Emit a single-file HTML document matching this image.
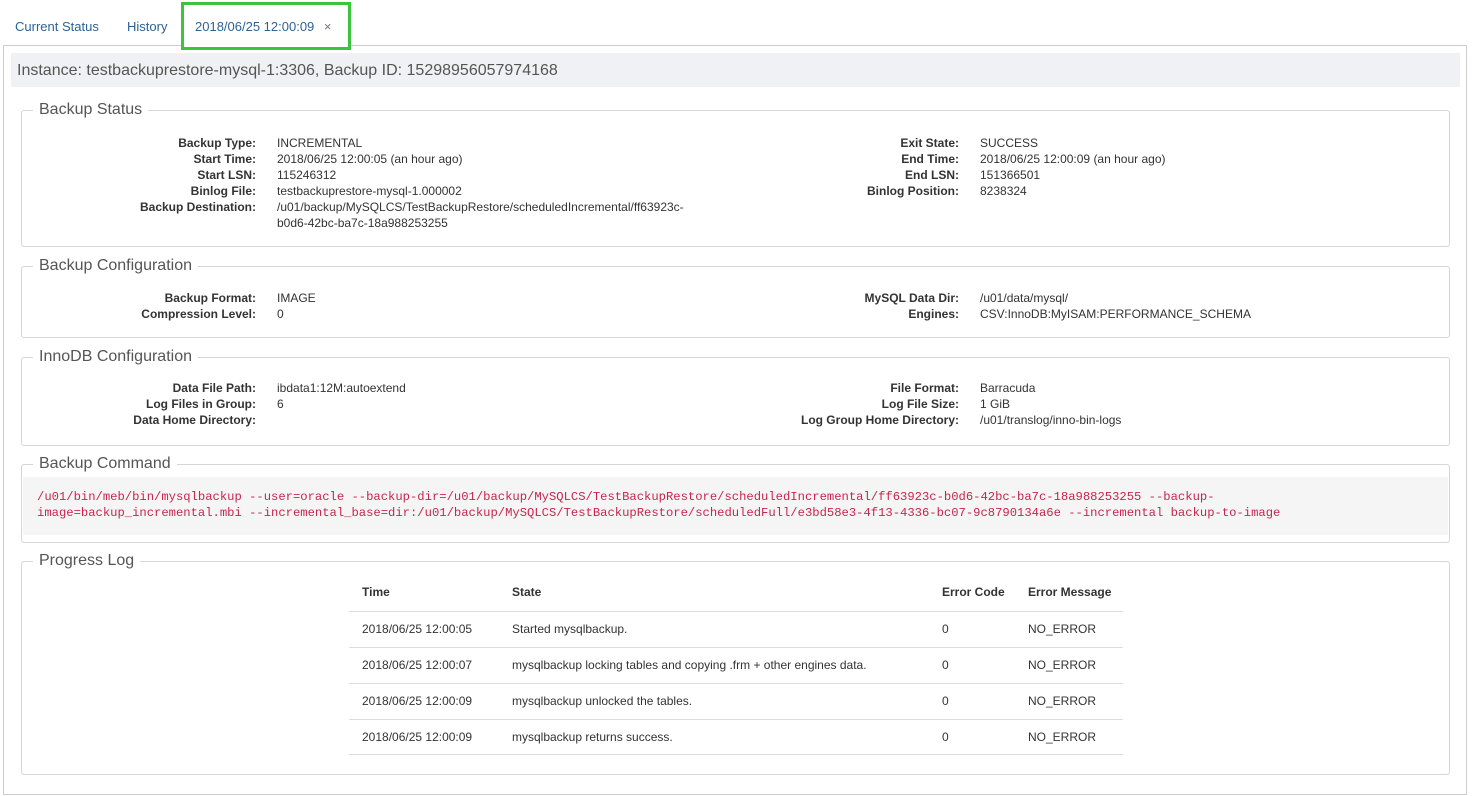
<!DOCTYPE html>
<html><head><meta charset="utf-8"><style>
*{box-sizing:border-box;margin:0;padding:0}
body{width:1472px;height:796px;background:#fff;font-family:"Liberation Sans",sans-serif;font-size:12px;color:#333;position:relative;overflow:hidden}
.a{position:absolute;white-space:nowrap}
.tab{position:absolute;top:19px;font-size:13px;color:#2a6496}
.fs{position:absolute;left:21px;width:1429px;border:1px solid #d6d6d6;border-radius:3px}
.lg{position:absolute;top:-11px;left:11px;background:#fff;padding:0 6px;font-size:16px;color:#555;line-height:20px}
.l{position:absolute;text-align:right;font-weight:bold;color:#333;line-height:16px;white-space:nowrap}
.v{position:absolute;line-height:16px;white-space:nowrap;color:#333}
.row{position:absolute;left:349px;width:774px;height:36px;border-top:1px solid #ddd}
.row span{position:absolute;top:10px;white-space:nowrap}
</style></head><body>
<div class="a" style="left:3px;top:45px;width:1464px;height:750px;border:1px solid #ccc"></div>
<div class="tab" style="left:15px">Current Status</div>
<div class="tab" style="left:127px">History</div>
<div class="a" style="left:181px;top:2px;width:170px;height:48px;border:3px solid #3cc43c;background:#fff"></div>
<div class="tab" style="left:195px">2018/06/25 12:00:09 <span style="color:#777;margin-left:6px">×</span></div>
<div class="a" style="left:11px;top:53px;width:1449px;height:34px;background:#f0f1f4;font-size:16px;color:#555;padding:9px 0 0 6px">Instance: testbackuprestore-mysql-1:3306, Backup ID: 15298956057974168</div>

<div class="fs" style="top:110px;height:137px"><div class="lg">Backup Status</div>
<div class="l" style="right:1193px;top:24px">Backup Type:<br>Start Time:<br>Start LSN:<br>Binlog File:<br>Backup Destination:</div>
<div class="v" style="left:255px;top:24px">INCREMENTAL<br>2018/06/25 12:00:05 (an hour ago)<br>115246312<br>testbackuprestore-mysql-1.000002<br>/u01/backup/MySQLCS/TestBackupRestore/scheduledIncremental/ff63923c-<br>b0d6-42bc-ba7c-18a988253255</div>
<div class="l" style="right:490px;top:24px">Exit State:<br>End Time:<br>End LSN:<br>Binlog Position:</div>
<div class="v" style="left:958px;top:24px">SUCCESS<br>2018/06/25 12:00:09 (an hour ago)<br>151366501<br>8238324</div>
</div>

<div class="fs" style="top:266px;height:72px"><div class="lg">Backup Configuration</div>
<div class="l" style="right:1193px;top:23px">Backup Format:<br>Compression Level:</div>
<div class="v" style="left:255px;top:23px">IMAGE<br>0</div>
<div class="l" style="right:490px;top:23px">MySQL Data Dir:<br>Engines:</div>
<div class="v" style="left:958px;top:23px">/u01/data/mysql/<br>CSV:InnoDB:MyISAM:PERFORMANCE_SCHEMA</div>
</div>

<div class="fs" style="top:357px;height:89px"><div class="lg">InnoDB Configuration</div>
<div class="l" style="right:1193px;top:22px">Data File Path:<br>Log Files in Group:<br>Data Home Directory:</div>
<div class="v" style="left:255px;top:22px">ibdata1:12M:autoextend<br>6</div>
<div class="l" style="right:490px;top:22px">File Format:<br>Log File Size:<br>Log Group Home Directory:</div>
<div class="v" style="left:958px;top:22px">Barracuda<br>1 GiB<br>/u01/translog/inno-bin-logs</div>
</div>

<div class="fs" style="top:464px;height:79px"><div class="lg">Backup Command</div>
<div class="a" style="left:1px;top:12px;width:1425px;height:58px;background:#f5f5f5"></div>
<div class="a" style="left:15px;top:24px;font-family:'Liberation Mono',monospace;font-size:12.2px;line-height:16px;color:#c7254e">/u01/bin/meb/bin/mysqlbackup --user=oracle --backup-dir=/u01/backup/MySQLCS/TestBackupRestore/scheduledIncremental/ff63923c-b0d6-42bc-ba7c-18a988253255 --backup-<br>image=backup_incremental.mbi --incremental_base=dir:/u01/backup/MySQLCS/TestBackupRestore/scheduledFull/e3bd58e3-4f13-4336-bc07-9c8790134a6e --incremental backup-to-image</div>
</div>

<div class="fs" style="top:561px;height:214px"><div class="lg">Progress Log</div></div>
<div class="a" style="left:362px;top:585px;font-weight:bold">Time</div>
<div class="a" style="left:512px;top:585px;font-weight:bold">State</div>
<div class="a" style="left:942px;top:585px;font-weight:bold">Error Code</div>
<div class="a" style="left:1028px;top:585px;font-weight:bold">Error Message</div>
<div class="row" style="top:611px"><span style="left:13px">2018/06/25 12:00:05</span><span style="left:163px">Started mysqlbackup.</span><span style="left:593px">0</span><span style="left:679px">NO_ERROR</span></div>
<div class="row" style="top:647px"><span style="left:13px">2018/06/25 12:00:07</span><span style="left:163px">mysqlbackup locking tables and copying .frm + other engines data.</span><span style="left:593px">0</span><span style="left:679px">NO_ERROR</span></div>
<div class="row" style="top:683px"><span style="left:13px">2018/06/25 12:00:09</span><span style="left:163px">mysqlbackup unlocked the tables.</span><span style="left:593px">0</span><span style="left:679px">NO_ERROR</span></div>
<div class="row" style="top:719px;border-bottom:1px solid #ddd"><span style="left:13px">2018/06/25 12:00:09</span><span style="left:163px">mysqlbackup returns success.</span><span style="left:593px">0</span><span style="left:679px">NO_ERROR</span></div>
</body></html>
